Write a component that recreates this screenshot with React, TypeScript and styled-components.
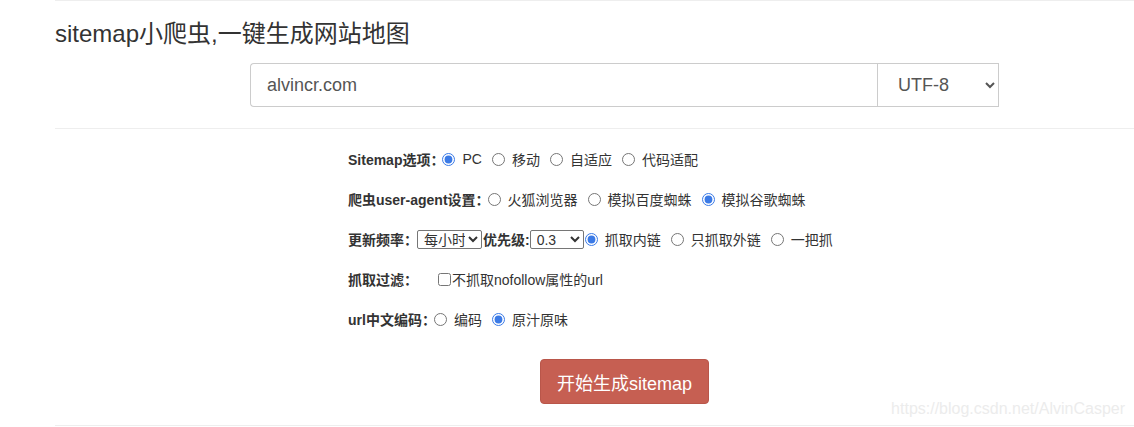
import styled, { createGlobalStyle } from 'styled-components';

const GlobalStyle = createGlobalStyle`
  html, body {
    margin: 0;
    padding: 0;
    background: #fff;
  }
  body {
    font-family: "Liberation Sans", "Noto Sans CJK SC", sans-serif;
    font-size: 14px;
    color: #333;
  }
`;

const Page = styled.div`
  position: relative;
  margin-left: 55px;
  height: 427px;
  border-top: 1px solid #eee;
  box-sizing: border-box;
`;

const Title = styled.h3`
  margin: 19px 0 0;
  font-size: 24px;
  font-weight: 400;
  line-height: 28px;
  color: #333;
`;

const InputGroup = styled.div`
  display: flex;
  width: 749px;
  height: 44px;
  margin: 15px 0 0 195px;
`;

const UrlInput = styled.input`
  flex: 1;
  box-sizing: border-box;
  height: 44px;
  padding: 0 16px;
  border: 1px solid #ccc;
  border-right: 0;
  border-radius: 4px 0 0 4px;
  font-family: inherit;
  font-size: 18px;
  color: #555;
  outline: none;
`;

const CharsetSelect = styled.select`
  width: 122px;
  height: 44px;
  box-sizing: border-box;
  padding: 0 10px 0 16px;
  border: 1px solid #ccc;
  border-radius: 0;
  background: #fff;
  font-family: inherit;
  font-size: 18px;
  color: #555;
  outline: none;
`;

const Divider = styled.div`
  margin-top: 21px;
  border-top: 1px solid #eee;
`;

const Options = styled.div`
  margin: 10px 0 0 293px;
`;

const Row = styled.div`
  display: flex;
  align-items: center;
  height: 40px;
  white-space: nowrap;
`;

const Label = styled.span<{ $gap?: number }>`
  font-size: 14px;
  font-weight: 700;
  color: #333;
  margin-right: ${(p) => p.$gap ?? -2}px;
`;

const Choice = styled.label`
  display: inline-flex;
  align-items: center;
  margin-right: 10px;
  font-size: 14px;
  color: #333;
`;

const Radio = styled.input.attrs({ type: 'radio' })`
  width: 13px;
  height: 13px;
  margin: 0 7px 0 0;
  accent-color: #3b7ae6;
`;

const Check = styled.input.attrs({ type: 'checkbox' })`
  width: 13px;
  height: 13px;
  margin: 0 1px 0 0;
`;

const SmallSelect = styled.select<{ $w: number }>`
  width: ${(p) => p.$w}px;
  height: 19px;
  box-sizing: border-box;
  padding: 0 0 0 2px;
  margin: 0 1px 0 0;
  border: 1px solid #767676;
  border-radius: 2px;
  background: #fff;
  font-family: inherit;
  font-size: 14px;
  color: #333;
`;

const Submit = styled.button`
  display: block;
  margin: 20px 0 0 485px;
  height: 45px;
  padding: 0 16px;
  border: 1px solid #b9564a;
  border-radius: 4px;
  background: #c65f52;
  color: #fff;
  font-family: inherit;
  font-size: 18px;
`;

const BottomRule = styled.div`
  margin-top: 21px;
  border-top: 1px solid #eee;
`;

const Watermark = styled.div`
  position: absolute;
  right: 9px;
  top: 399px;
  font-size: 16px;
  line-height: 18px;
  color: #ececec;
`;

export default function App() {
  return (
    <>
      <GlobalStyle />
      <Page>
        <Title>sitemap小爬虫,一键生成网站地图</Title>
        <InputGroup>
          <UrlInput defaultValue="alvincr.com" />
          <CharsetSelect defaultValue="UTF-8">
            <option>UTF-8</option>
            <option>GBK</option>
          </CharsetSelect>
        </InputGroup>
        <Divider />
        <Options>
          <Row>
            <Label>Sitemap选项：</Label>
            <Choice><Radio name="type" defaultChecked />PC</Choice>
            <Choice><Radio name="type" />移动</Choice>
            <Choice><Radio name="type" />自适应</Choice>
            <Choice><Radio name="type" />代码适配</Choice>
          </Row>
          <Row>
            <Label>爬虫user-agent设置：</Label>
            <Choice><Radio name="ua" />火狐浏览器</Choice>
            <Choice><Radio name="ua" />模拟百度蜘蛛</Choice>
            <Choice><Radio name="ua" defaultChecked />模拟谷歌蜘蛛</Choice>
          </Row>
          <Row>
            <Label $gap={-1}>更新频率：</Label>
            <SmallSelect $w={65} defaultValue="每小时">
              <option>每小时</option>
              <option>每天</option>
              <option>每周</option>
            </SmallSelect>
            <Label $gap={0}>优先级:</Label>
            <SmallSelect $w={54} defaultValue="0.3">
              <option>1.0</option>
              <option>0.5</option>
              <option>0.3</option>
            </SmallSelect>
            <Choice><Radio name="scope" defaultChecked />抓取内链</Choice>
            <Choice><Radio name="scope" />只抓取外链</Choice>
            <Choice><Radio name="scope" />一把抓</Choice>
          </Row>
          <Row>
            <Label $gap={20}>抓取过滤：</Label>
            <Choice><Check />不抓取nofollow属性的url</Choice>
          </Row>
          <Row>
            <Label>url中文编码：</Label>
            <Choice><Radio name="enc" />编码</Choice>
            <Choice><Radio name="enc" defaultChecked />原汁原味</Choice>
          </Row>
        </Options>
        <Submit>开始生成sitemap</Submit>
        <BottomRule />
        <Watermark>https://blog.csdn.net/AlvinCasper</Watermark>
      </Page>
    </>
  );
}
